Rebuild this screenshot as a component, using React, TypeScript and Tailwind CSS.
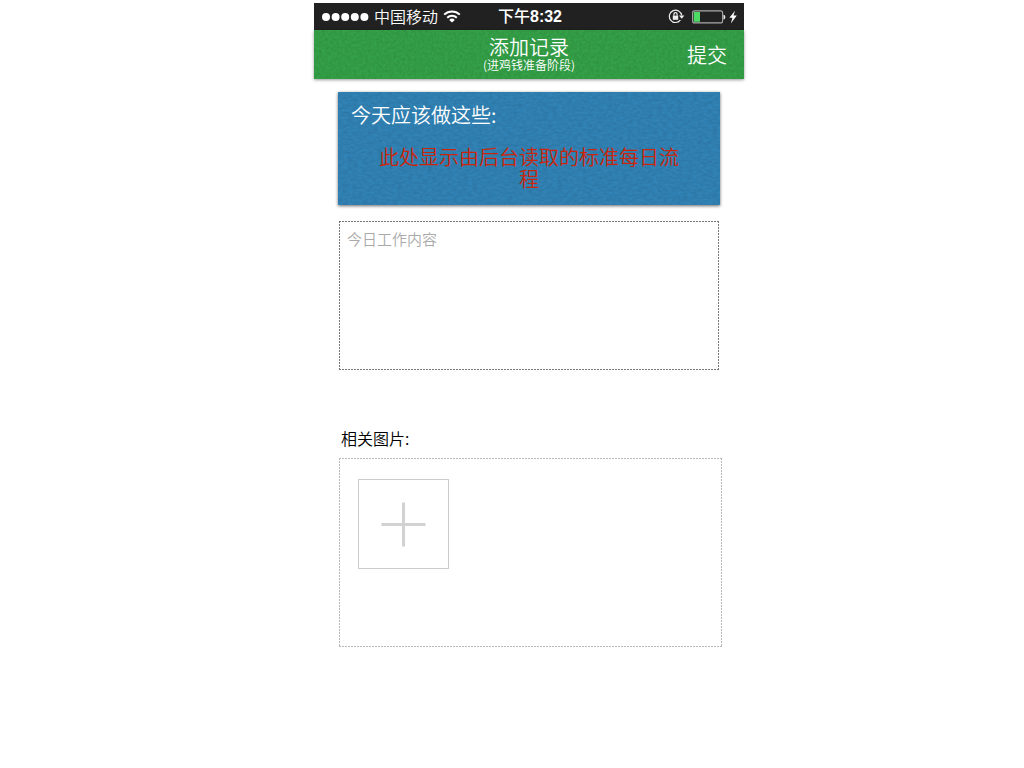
import React from 'react';

function PaperTexture({ id, frequency, seed }: { id: string; frequency: string; seed: number }) {
  return (
    <svg className="pointer-events-none absolute inset-0 h-full w-full" aria-hidden="true">
      <filter id={id} x="0" y="0" width="100%" height="100%">
        <feTurbulence type="fractalNoise" baseFrequency={frequency} numOctaves="3" seed={seed} />
        <feColorMatrix values="0 0 0 0 0  0 0 0 0 0  0 0 0 0 0  0.9 0 0 0 -0.3" />
      </filter>
      <rect width="100%" height="100%" filter={`url(#${id})`} opacity="0.2" />
    </svg>
  );
}

function SignalDots() {
  return (
    <svg width="47" height="10" viewBox="0 0 47 10" fill="#fff" aria-hidden="true">
      {[4, 13.6, 23.2, 32.8, 42.4].map((x) => (
        <circle key={x} cx={x} cy="5" r="4" />
      ))}
    </svg>
  );
}

function WifiIcon() {
  return (
    <svg width="18" height="13" viewBox="0 0 18 13" fill="none" stroke="#fff" strokeWidth="2" aria-hidden="true">
      <path d="M1.2 4.6a11.2 11.2 0 0 1 15.6 0" />
      <path d="M4.2 7.7a7 7 0 0 1 9.6 0" />
      <path d="M9 12.6 6.2 9.9a4 4 0 0 1 5.6 0Z" fill="#fff" stroke="none" />
    </svg>
  );
}

function RotationLockIcon() {
  return (
    <svg width="17" height="15" viewBox="0 0 17 15" fill="none" stroke="#eee" strokeWidth="1.2" aria-hidden="true">
      <path d="M12.4 11.2A6.2 6.2 0 1 1 13.7 6.4" />
      <path d="M11 6.6h5.4l-2.7 3.2Z" fill="#eee" stroke="none" />
      <rect x="4.8" y="6.6" width="5.4" height="4.2" fill="#eee" stroke="none" />
      <path d="M5.9 6.8V5.2a1.6 1.6 0 0 1 3.2 0v1.6" />
    </svg>
  );
}

function BatteryIcon() {
  return (
    <svg width="46" height="14" viewBox="0 0 46 14" aria-hidden="true">
      <rect x="0.6" y="0.9" width="30" height="12" rx="2" fill="none" stroke="#aaa" strokeWidth="1.1" />
      <rect x="1.8" y="2" width="6.2" height="9.8" fill="#4cd964" />
      <path d="M31.8 5c1.6.4 1.6 3.8 0 4.2Z" fill="#eee" stroke="#eee" strokeWidth=".6" />
      <path d="M43 .8 37.4 7.8h3.1L38.8 13.4l6-7.8h-3.3Z" fill="#fff" />
    </svg>
  );
}

const darkDashes =
  'bg-[repeating-linear-gradient(90deg,#777_0_2px,transparent_2px_3px),repeating-linear-gradient(90deg,#777_0_2px,transparent_2px_3px),repeating-linear-gradient(180deg,#777_0_2px,transparent_2px_3px),repeating-linear-gradient(180deg,#777_0_2px,transparent_2px_3px)] bg-[size:100%_1px,100%_1px,1px_100%,1px_100%] bg-[position:0_0,0_100%,0_0,100%_0] bg-no-repeat';
const lightDashes =
  'bg-[repeating-linear-gradient(90deg,#bbb_0_2px,transparent_2px_3px),repeating-linear-gradient(90deg,#bbb_0_2px,transparent_2px_3px),repeating-linear-gradient(180deg,#bbb_0_2px,transparent_2px_3px),repeating-linear-gradient(180deg,#bbb_0_2px,transparent_2px_3px)] bg-[size:100%_1px,100%_1px,1px_100%,1px_100%] bg-[position:0_0,0_100%,0_0,100%_0] bg-no-repeat';

export default function App() {
  return (
    <div className="flex min-h-screen justify-center bg-white pt-[3px] font-['Liberation_Sans','Noto_Sans_CJK_SC',sans-serif] sm:pl-[34px]">
      <div className="w-full max-w-[430px]">
        <div className="grid h-[27px] grid-cols-[1fr_auto_1fr] items-center bg-[#212121] pr-[6px] pl-2 text-white">
          <div className="flex items-center gap-[5px]">
            <SignalDots />
            <span className="pb-[2px] font-['Noto_Sans_CJK_SC',sans-serif] text-base leading-none font-[350]">中国移动</span>
            <WifiIcon />
          </div>
          <time className="text-base leading-none font-bold">
            <span className="font-medium">下午</span>8:32
          </time>
          <div className="flex items-center justify-end gap-[7px]">
            <RotationLockIcon />
            <BatteryIcon />
          </div>
        </div>

        <header className="relative h-[49px] bg-[#34a047] font-['Noto_Sans_CJK_SC',sans-serif] font-[350] text-white shadow-[0_1px_3px_rgba(0,0,0,0.4)]">
          <PaperTexture id="green-paper" frequency="0.35" seed={4} />
          <div className="relative grid h-full grid-cols-[1fr_auto_1fr] items-center">
            <div className="col-start-2 pb-[2px] text-center">
              <h1 className="text-[20px] leading-[22px]">添加记录</h1>
              <p className="text-xs leading-[14px]">(进鸡钱准备阶段)</p>
            </div>
            <button type="button" className="mr-[17px] justify-self-end text-[20px] leading-6">
              提交
            </button>
          </div>
        </header>

        <main className="px-6 pt-[13px] font-['Noto_Sans_CJK_SC',sans-serif]">
          <section className="relative h-[113px] bg-[#3182b5] font-[350] shadow-[0_1px_3px_rgba(0,0,0,0.6)]">
            <PaperTexture id="blue-paper" frequency="0.2 0.4" seed={9} />
            <div className="relative px-[13px] pt-3">
              <h2 className="text-[20px] leading-[22px] text-white">今天应该做这些:</h2>
              <p className="mx-auto mt-5 max-w-[304px] text-center text-[20px] leading-[22px] text-[#cb2509]">
                此处显示由后台读取的标准每日流程
              </p>
            </div>
          </section>

          <textarea
            aria-label="今日工作内容"
            placeholder="今日工作内容"
            className={`mx-px mt-4 block h-[149px] w-[calc(100%-2px)] resize-none px-2 pt-[7px] text-[15px] leading-[22px] font-[350] outline-none placeholder:text-[#aaa] ${darkDashes}`}
          />

          <h2 id="pictures" className="mt-[57px] ml-[3px] text-base leading-[22px] font-[350] text-black">
            相关图片:
          </h2>
          <section
            aria-labelledby="pictures"
            className={`-mr-[2px] mt-[9px] ml-px h-[189px] px-[19px] pt-[21px] ${lightDashes}`}
          >
            <button
              type="button"
              aria-label="添加图片"
              className="flex h-[90px] w-[91px] items-center justify-center border border-[#ccc]"
            >
              <svg width="45" height="45" viewBox="0 0 45 45" stroke="#d2d2d2" strokeWidth="3" aria-hidden="true">
                <path d="M22.5 0.5v44M0.5 22.5h44" />
              </svg>
            </button>
          </section>
        </main>
      </div>
    </div>
  );
}
